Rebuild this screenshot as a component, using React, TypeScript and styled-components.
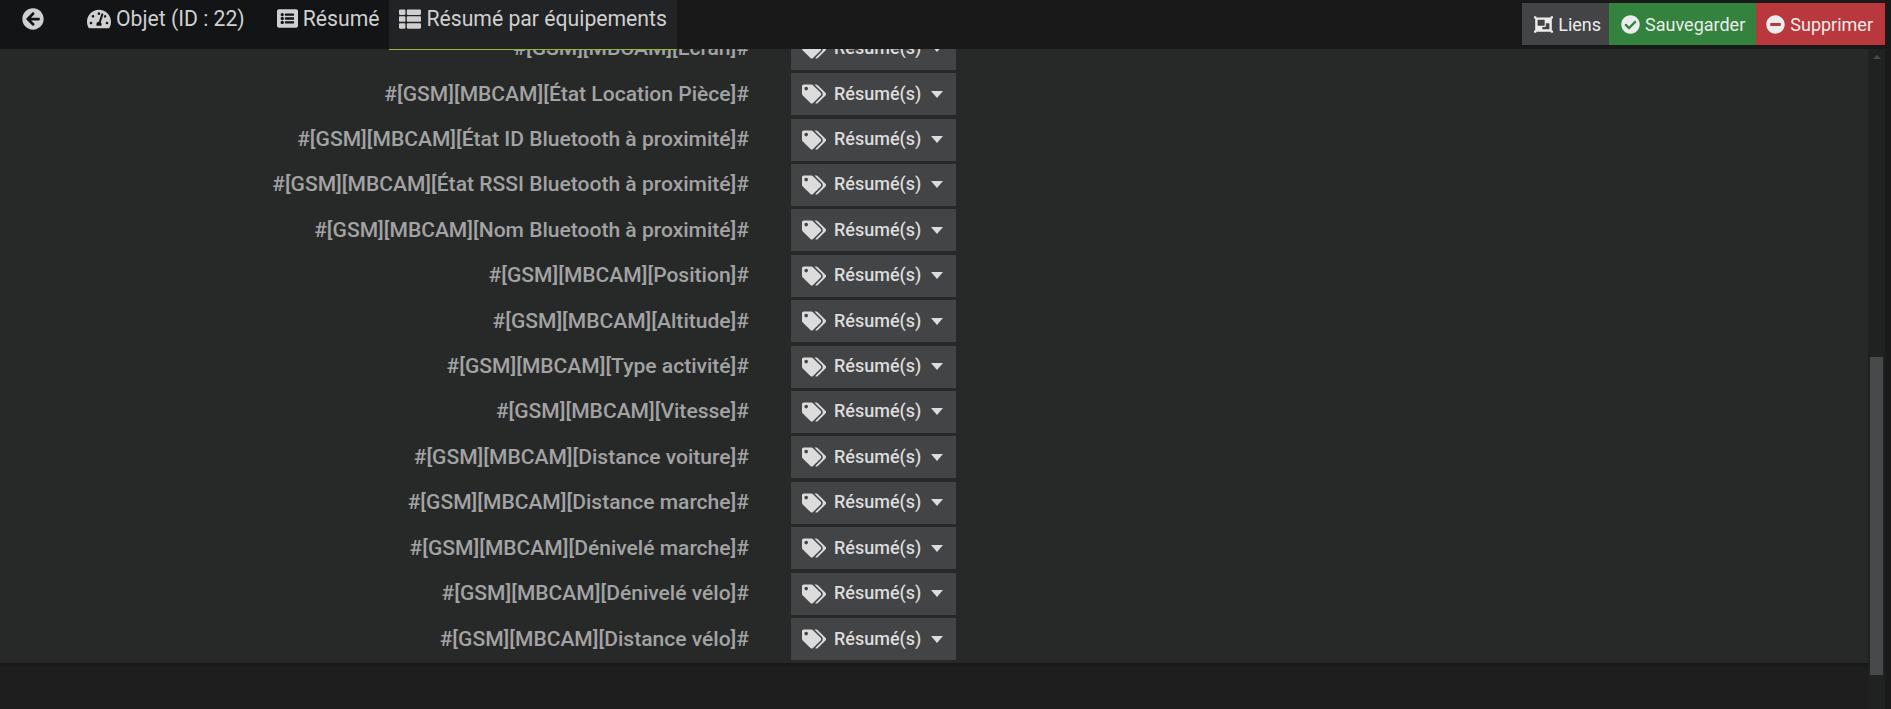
import styled, { createGlobalStyle } from "styled-components";
import {
  FaArrowCircleLeft,
  FaCheckCircle,
  FaListAlt,
  FaMinusCircle,
  FaObjectGroup,
  FaTachometerAlt,
  FaTags,
  FaThList,
} from "react-icons/fa";

const GlobalStyle = createGlobalStyle`
  html, body {
    margin: 0;
    height: 100%;
    overflow: hidden;
    background: #1e1e1e;
    font-family: Roboto, "Liberation Sans", sans-serif;
  }
  #root {
    height: 100%;
  }
`;

const Page = styled.div`
  display: flex;
  flex-direction: column;
  height: 709px;
`;

const Header = styled.header`
  flex: none;
  position: relative;
  z-index: 1;
  display: flex;
  justify-content: space-between;
  height: 49px;
  background: #191919;
`;

const Tabs = styled.nav`
  display: flex;
  padding-left: 22px;
  background: linear-gradient(to right, #121416 389px, transparent 389px);
`;

const Tab = styled.a<{ $active?: boolean; $offset: number; $iconSize: number }>`
  display: flex;
  align-items: center;
  gap: 5px;
  box-sizing: border-box;
  height: 50px;
  margin-left: ${({ $offset }) => $offset}px;
  padding: 0 ${({ $active }) => ($active ? "10px" : "0")} 12px;
  font-size: 21.2px;
  color: #d0d0d0;
  background: ${({ $active }) => ($active ? "#222324" : "transparent")};
  border-bottom: 1px solid ${({ $active }) => ($active ? "#93b82f" : "transparent")};

  svg {
    flex: none;
    font-size: ${({ $iconSize }) => $iconSize}px;
  }
`;

const Actions = styled.div`
  display: flex;
  height: 45px;
  padding: 3px 6px 0 0;
  box-sizing: border-box;
`;

const ActionButton = styled.button<{ $color: string; $padding: string }>`
  display: flex;
  align-items: center;
  gap: 5px;
  height: 42px;
  padding: ${({ $padding }) => $padding};
  border: 0;
  color: #ececec;
  background: ${({ $color }) => $color};
  font: 400 18px Roboto, sans-serif;

  svg {
    font-size: 19px;
  }
`;

const Body = styled.div`
  flex: 1;
  min-height: 0;
  display: flex;
`;

const Main = styled.main`
  flex: 1;
  min-width: 0;
  height: 614px;
  display: flex;
  flex-direction: column;
  justify-content: flex-end;
  overflow: hidden;
  padding-bottom: 3px;
  box-sizing: border-box;
  background: #272929;
  box-shadow: 0 2px 5px rgba(0, 0, 0, 0.35);
`;

const Row = styled.div`
  flex: none;
  display: grid;
  grid-template-columns: 749px 165px;
  column-gap: 42px;
  align-items: center;
  height: 42px;
  margin-top: 3.42px;
`;

const Label = styled.label`
  padding-bottom: 2px;
  text-align: right;
  font-size: 21.06px;
  font-weight: 500;
  color: #a3a3a3;
  white-space: nowrap;
`;

const SummaryButton = styled.button`
  display: flex;
  align-items: center;
  gap: 8px;
  height: 42px;
  padding: 0 0 0 11px;
  border: 0;
  color: #dcdcdc;
  background: #434446;
  font: 500 18px Roboto, sans-serif;

  svg {
    font-size: 24px;
  }
`;

const SummaryText = styled.span`
  padding-bottom: 2px;
`;

const Caret = styled.span`
  margin-left: 2px;
  border-left: 6.5px solid transparent;
  border-right: 6.5px solid transparent;
  border-top: 7px solid #dcdcdc;
`;

const ScrollTrack = styled.aside`
  flex: none;
  position: relative;
  width: 23px;
  box-sizing: border-box;
  background: #202121;
  border-right: 6px solid #1a1a1a;
`;

const ScrollArrow = styled.span`
  position: absolute;
  top: 6px;
  left: 5px;
  border-left: 4px solid transparent;
  border-right: 4px solid transparent;
  border-bottom: 4px solid #4a4a4a;
`;

const ScrollThumb = styled.span`
  position: absolute;
  top: 308px;
  left: 2px;
  width: 13px;
  height: 318px;
  background: #48494b;
`;

const labels = [
  "Écran",
  "État Location Pièce",
  "État ID Bluetooth à proximité",
  "État RSSI Bluetooth à proximité",
  "Nom Bluetooth à proximité",
  "Position",
  "Altitude",
  "Type activité",
  "Vitesse",
  "Distance voiture",
  "Distance marche",
  "Dénivelé marche",
  "Dénivelé vélo",
  "Distance vélo",
];

export default function App() {
  return (
    <Page>
      <GlobalStyle />
      <Header>
        <Tabs>
          <Tab $offset={0} $iconSize={22}>
            <FaArrowCircleLeft />
          </Tab>
          <Tab $offset={43} $iconSize={24}>
            <FaTachometerAlt />
            Objet (ID : 22)
          </Tab>
          <Tab $offset={32} $iconSize={21}>
            <FaListAlt />
            Résumé
          </Tab>
          <Tab $active $offset={10} $iconSize={22}>
            <FaThList />
            Résumé par équipements
          </Tab>
        </Tabs>
        <Actions>
          <ActionButton $color="#434446" $padding="0 8px 0 12px">
            <FaObjectGroup />
            Liens
          </ActionButton>
          <ActionButton $color="#33833e" $padding="0 11px 0 12px">
            <FaCheckCircle />
            Sauvegarder
          </ActionButton>
          <ActionButton $color="#b8383d" $padding="0 12px 0 10px">
            <FaMinusCircle />
            Supprimer
          </ActionButton>
        </Actions>
      </Header>
      <Body>
        <Main>
          {labels.map((label) => (
            <Row key={label}>
              <Label>#[GSM][MBCAM][{label}]#</Label>
              <SummaryButton>
                <FaTags />
                <SummaryText>Résumé(s)</SummaryText>
                <Caret />
              </SummaryButton>
            </Row>
          ))}
        </Main>
        <ScrollTrack>
          <ScrollArrow />
          <ScrollThumb />
        </ScrollTrack>
      </Body>
    </Page>
  );
}
